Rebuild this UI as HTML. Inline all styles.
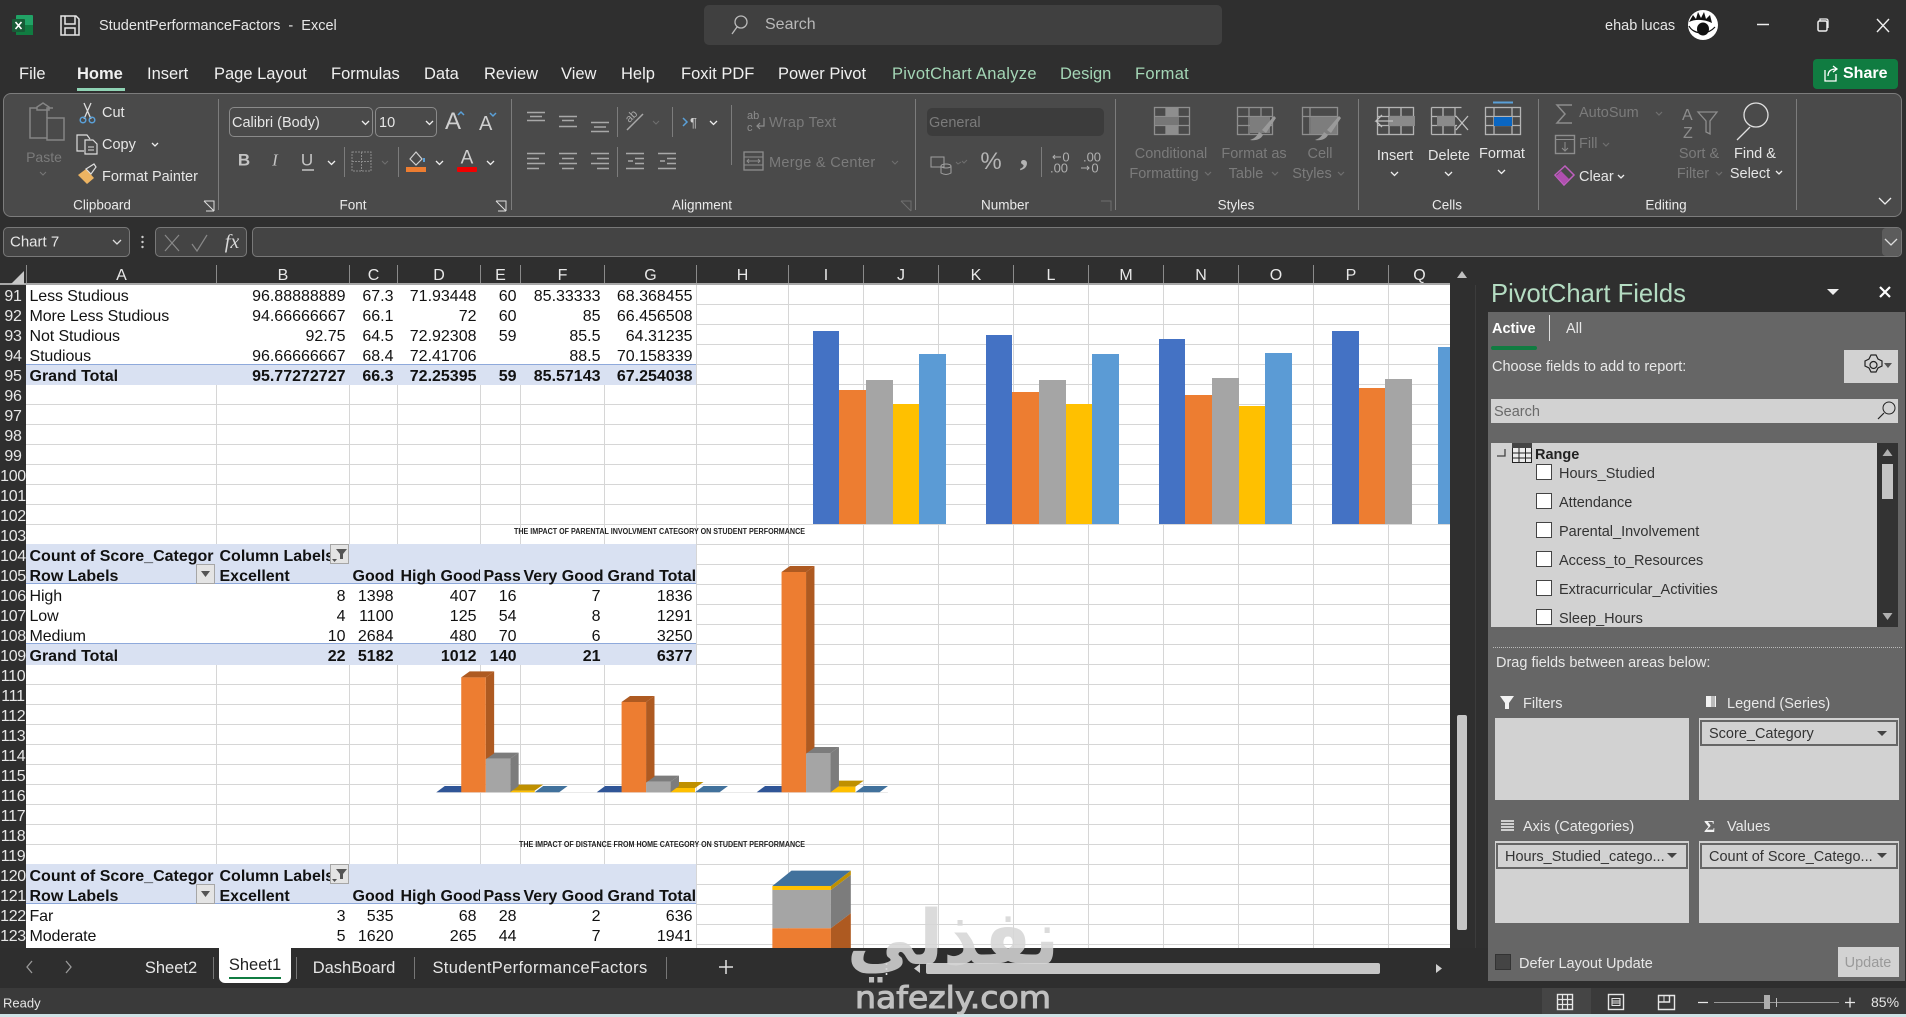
<!DOCTYPE html>
<html><head><meta charset="utf-8"><title>StudentPerformanceFactors - Excel</title>
<style>
*{box-sizing:border-box}
html,body{margin:0;padding:0;width:1906px;height:1017px;overflow:hidden;background:#2f2f2f;font-family:"Liberation Sans",sans-serif;color:#e6e6e6}
.t,.c{position:absolute;white-space:nowrap;font-size:14.5px;line-height:1}
.t{transform:translateY(-50%)}
.c{transform:translate(-50%,-50%)}
.d{color:#7b7b7b}
.tab{font-size:16.5px;top:74px;color:#f0f0f0}
.g{color:#a4d6b6}
.lb{top:205px;font-size:13.5px;color:#eaeaea}
.box{position:absolute}
#sheet{position:absolute;left:0;top:285px;width:1450px;height:663px;background-color:#fff;background-image:repeating-linear-gradient(to bottom,transparent 0,transparent 19px,#d6d6d6 19px,#d6d6d6 20px);overflow:hidden}
#sheet .v{position:absolute;top:0;bottom:0;width:1px;background:#d6d6d6}
.p{position:absolute;left:26px;width:670px;height:20px;background:#fff}
.bl{background:#d9e1f2}
.rows{position:absolute;left:0;top:2px;width:700px;color:#111;font-size:16px;line-height:20px}
.rw{position:relative;height:20px}
.rw span{position:absolute;top:0;height:20px;overflow:hidden;white-space:nowrap;padding:0 3.5px;text-align:right}
.A{left:26px;width:190px;text-align:left!important;letter-spacing:-.1px}
.bd .A{letter-spacing:0}
.B{left:216px;width:133px}.C{left:349px;width:48px}.D{left:397px;width:83px}.E{left:480px;width:40px}.F{left:520px;width:84px}.G{left:604px;width:92px}
.l{text-align:left!important}
.bd span{font-weight:bold}
#colh{position:absolute;left:0;top:265px;width:1450px;height:20px;background:#2f2f2f;border-bottom:2px solid #a8a8a8}
#colh span{position:absolute;top:0;height:18px;font-size:16px;line-height:21px;text-align:center;color:#e8e8e8;border-left:1px solid #8a8a8a}
#rowh{position:absolute;left:0;top:285px;width:26px;height:663px;background:#2f2f2f;overflow:hidden}
#rowh div{height:20px;line-height:24px;font-size:16px;text-align:center;color:#e8e8e8;letter-spacing:-.3px}
.fb{position:absolute;width:19px;height:20px;background:#e4e4e4;border:1px solid #a6a6a6}
#pv{position:absolute;left:1488px;top:312px;width:417px;height:669px;background:#666}
.w{position:absolute;background:#d2d2d2}
.cb{position:absolute;left:1536px;width:16px;height:16px;background:#fff;border:1px solid #444}
.f{color:#333;font-size:14.5px}
.it{position:absolute;background:#d2d2d2;border:2px solid #666;height:26px}
.wh{color:#e8e8e8;font-size:14.5px}
</style></head>
<body>

<!-- tabs / title -->
<span class="t" style="left:99px;top:26px;font-size:14.5px">StudentPerformanceFactors &nbsp;-&nbsp; Excel</span>
<div class="box" style="left:704px;top:5px;width:518px;height:40px;background:#404040;border-radius:5px"></div>
<span class="t" style="left:765px;top:25px;font-size:16px;color:#b8b8b8">Search</span>
<span class="t" style="left:1605px;top:26px;font-size:14.5px">ehab lucas</span>

<span class="t tab" style="left:19px">File</span>
<span class="t tab" style="left:77px;font-weight:bold">Home</span>
<span class="t tab" style="left:147px">Insert</span>
<span class="t tab" style="left:214px">Page Layout</span>
<span class="t tab" style="left:331px">Formulas</span>
<span class="t tab" style="left:424px">Data</span>
<span class="t tab" style="left:484px">Review</span>
<span class="t tab" style="left:561px">View</span>
<span class="t tab" style="left:621px">Help</span>
<span class="t tab" style="left:681px">Foxit PDF</span>
<span class="t tab" style="left:778px">Power Pivot</span>
<span class="t tab g" style="left:892px;letter-spacing:.3px">PivotChart Analyze</span>
<span class="t tab g" style="left:1060px">Design</span>
<span class="t tab g" style="left:1135px;letter-spacing:.3px">Format</span>
<div class="box" style="left:77px;top:88px;width:48px;height:3px;background:#8fd3b4"></div>
<div class="box" style="left:1813px;top:59px;width:85px;height:30px;background:#107c41;border-radius:4px"></div>
<span class="t" style="left:1843px;top:74px;font-size:16px;font-weight:bold;color:#fff">Share</span>

<!-- ribbon -->
<div class="box" style="left:3px;top:93px;width:1899px;height:124px;background:#4a4a4a;border:1px solid #7c7c7c;border-radius:8px"></div>

<span class="c d" style="left:44px;top:157px;font-size:14px">Paste</span>
<span class="t" style="left:102px;top:113px">Cut</span>
<span class="t" style="left:102px;top:145px">Copy</span>
<span class="t" style="left:102px;top:177px">Format Painter</span>
<span class="c lb" style="left:102px">Clipboard</span>

<div class="box" style="left:229px;top:107px;width:144px;height:30px;border:1px solid #8a8a8a;border-radius:5px"></div>
<div class="box" style="left:375px;top:107px;width:62px;height:30px;border:1px solid #8a8a8a;border-radius:5px"></div>
<span class="t" style="left:232px;top:123px">Calibri (Body)</span>
<span class="t" style="left:379px;top:123px">10</span>
<span class="t" style="left:445px;top:122px;font-size:24px;color:#cfcfcf">A</span>
<span class="t" style="left:479px;top:124px;font-size:20px;color:#cfcfcf">A</span>
<span class="c" style="left:244px;top:160px;font-size:17px;font-weight:bold;color:#c4c4c4">B</span>
<span class="c" style="left:275px;top:160px;font-size:17px;font-style:italic;color:#c4c4c4;font-family:'Liberation Serif',serif">I</span>
<span class="c" style="left:307px;top:160px;font-size:17px;color:#c4c4c4">U</span>
<span class="c" style="left:467px;top:158px;font-size:19px;color:#cfcfcf">A</span>
<span class="c lb" style="left:353px">Font</span>

<span class="t d" style="left:769px;top:123px;letter-spacing:.3px">Wrap Text</span>
<span class="t d" style="left:769px;top:163px;letter-spacing:.3px">Merge &amp; Center</span>
<span class="c lb" style="left:702px">Alignment</span>

<div class="box" style="left:927px;top:108px;width:177px;height:28px;background:#3c3c3c;border-radius:5px"></div>
<span class="t d" style="left:929px;top:123px">General</span>
<span class="c" style="left:991px;top:162px;font-size:24px;color:#b4b4b4">%</span>
<span class="c" style="left:1024px;top:155px;font-size:34px;font-weight:bold;color:#b4b4b4;font-family:'Liberation Serif',serif">,</span>
<span class="c" style="left:1066px;top:157px;font-size:13px;color:#b0b0b0">0</span>
<span class="c" style="left:1059px;top:168px;font-size:13px;color:#b0b0b0">.00</span>
<span class="c" style="left:1092px;top:157px;font-size:13px;color:#b0b0b0">.00</span>
<span class="c" style="left:1095px;top:168px;font-size:13px;color:#b0b0b0">0</span>
<span class="c lb" style="left:1005px">Number</span>

<span class="c d" style="left:1171px;top:154px">Conditional</span>
<span class="c d" style="left:1164px;top:174px">Formatting</span>
<span class="c d" style="left:1254px;top:154px">Format as</span>
<span class="c d" style="left:1246px;top:174px">Table</span>
<span class="c d" style="left:1320px;top:154px">Cell</span>
<span class="c d" style="left:1312px;top:174px">Styles</span>
<span class="c lb" style="left:1236px">Styles</span>

<span class="c" style="left:1395px;top:156px">Insert</span>
<span class="c" style="left:1449px;top:156px">Delete</span>
<span class="c" style="left:1502px;top:154px">Format</span>
<span class="c lb" style="left:1447px">Cells</span>

<span class="t d" style="left:1579px;top:113px">AutoSum</span>
<span class="t d" style="left:1579px;top:144px">Fill</span>
<span class="t" style="left:1579px;top:177px">Clear</span>
<span class="c d" style="left:1699px;top:154px">Sort &amp;</span>
<span class="c d" style="left:1693px;top:174px">Filter</span>
<span class="c" style="left:1755px;top:154px">Find &amp;</span>
<span class="c" style="left:1750px;top:174px">Select</span>
<span class="c lb" style="left:1666px">Editing</span>

<!-- formula bar -->
<div class="box" style="left:3px;top:227px;width:127px;height:30px;background:#444;border:1px solid #787878;border-radius:5px"></div>
<span class="t" style="left:10px;top:242px;font-size:15px">Chart 7</span>
<div class="box" style="left:155px;top:227px;width:92px;height:30px;background:#444;border:1px solid #787878;border-radius:5px"></div>
<div class="box" style="left:252px;top:227px;width:1650px;height:30px;background:#444;border:1px solid #787878;border-radius:5px"></div>
<div class="box" style="left:1882px;top:228px;width:19px;height:28px;background:#5c5c5c;border-radius:4px"></div>
<span class="c" style="left:232px;top:242px;font-size:20px;font-style:italic;font-family:'Liberation Serif',serif;color:#d8d8d8">fx</span>

<!-- sheet -->
<div id="sheet">
<i class="v" style="left:216px"></i><i class="v" style="left:349px"></i><i class="v" style="left:397px"></i><i class="v" style="left:480px"></i><i class="v" style="left:520px"></i><i class="v" style="left:604px"></i><i class="v" style="left:696px"></i><i class="v" style="left:788px"></i><i class="v" style="left:863px"></i><i class="v" style="left:938px"></i><i class="v" style="left:1013px"></i><i class="v" style="left:1088px"></i><i class="v" style="left:1163px"></i><i class="v" style="left:1238px"></i><i class="v" style="left:1313px"></i><i class="v" style="left:1388px"></i>
<div class="p" style="top:0;height:80px"></div>
<div class="p bl" style="top:79px;border-top:1.5px solid #8ea9db;height:21px"></div>
<div class="p bl" style="top:259px;height:40px;border-bottom:1.5px solid #8ea9db"></div>
<div class="p" style="top:299px;height:60px"></div>
<div class="p bl" style="top:358px;border-top:1.5px solid #8ea9db;height:22px"></div>
<div class="p bl" style="top:579px;height:40px;border-bottom:1.5px solid #8ea9db"></div>
<div class="p" style="top:619px;height:44px"></div>

<div class="rows">
<div class="rw"><span class="A">Less Studious</span><span class="B">96.88888889</span><span class="C">67.3</span><span class="D">71.93448</span><span class="E">60</span><span class="F">85.33333</span><span class="G">68.368455</span></div>
<div class="rw"><span class="A">More Less Studious</span><span class="B">94.66666667</span><span class="C">66.1</span><span class="D">72</span><span class="E">60</span><span class="F">85</span><span class="G">66.456508</span></div>
<div class="rw"><span class="A">Not Studious</span><span class="B">92.75</span><span class="C">64.5</span><span class="D">72.92308</span><span class="E">59</span><span class="F">85.5</span><span class="G">64.31235</span></div>
<div class="rw"><span class="A">Studious</span><span class="B">96.66666667</span><span class="C">68.4</span><span class="D">72.41706</span><span class="E"></span><span class="F">88.5</span><span class="G">70.158339</span></div>
<div class="rw bd"><span class="A">Grand Total</span><span class="B">95.77272727</span><span class="C">66.3</span><span class="D">72.25395</span><span class="E">59</span><span class="F">85.57143</span><span class="G">67.254038</span></div>
<div class="rw"></div><div class="rw"></div><div class="rw"></div><div class="rw"></div><div class="rw"></div><div class="rw"></div><div class="rw"></div><div class="rw"></div>
<div class="rw bd"><span class="A">Count of Score_Categor</span><span class="B l" style="width:114px">Column Labels</span></div>
<div class="rw bd"><span class="A">Row Labels</span><span class="B l">Excellent</span><span class="C l">Good</span><span class="D l">High Good</span><span class="E l">Pass</span><span class="F l">Very Good</span><span class="G l">Grand Total</span></div>
<div class="rw"><span class="A">High</span><span class="B">8</span><span class="C">1398</span><span class="D">407</span><span class="E">16</span><span class="F">7</span><span class="G">1836</span></div>
<div class="rw"><span class="A">Low</span><span class="B">4</span><span class="C">1100</span><span class="D">125</span><span class="E">54</span><span class="F">8</span><span class="G">1291</span></div>
<div class="rw"><span class="A">Medium</span><span class="B">10</span><span class="C">2684</span><span class="D">480</span><span class="E">70</span><span class="F">6</span><span class="G">3250</span></div>
<div class="rw bd"><span class="A">Grand Total</span><span class="B">22</span><span class="C">5182</span><span class="D">1012</span><span class="E">140</span><span class="F">21</span><span class="G">6377</span></div>
<div class="rw"></div><div class="rw"></div><div class="rw"></div><div class="rw"></div><div class="rw"></div><div class="rw"></div><div class="rw"></div><div class="rw"></div><div class="rw"></div><div class="rw"></div>
<div class="rw bd"><span class="A">Count of Score_Categor</span><span class="B l" style="width:114px">Column Labels</span></div>
<div class="rw bd"><span class="A">Row Labels</span><span class="B l">Excellent</span><span class="C l">Good</span><span class="D l">High Good</span><span class="E l">Pass</span><span class="F l">Very Good</span><span class="G l">Grand Total</span></div>
<div class="rw"><span class="A">Far</span><span class="B">3</span><span class="C">535</span><span class="D">68</span><span class="E">28</span><span class="F">2</span><span class="G">636</span></div>
<div class="rw"><span class="A">Moderate</span><span class="B">5</span><span class="C">1620</span><span class="D">265</span><span class="E">44</span><span class="F">7</span><span class="G">1941</span></div>
</div>
<div class="fb" style="left:330px;top:259px"></div>
<div class="fb" style="left:196px;top:279px"></div>
<div class="fb" style="left:330px;top:579px"></div>
<div class="fb" style="left:196px;top:599px"></div>
</div>

<!-- charts -->
<svg style="position:absolute;left:0;top:0" width="1906" height="1017" viewBox="0 0 1906 1017">
<defs><clipPath id="cl"><rect x="26" y="285" width="1424" height="663"/></clipPath></defs>
<g clip-path="url(#cl)">
<line x1="795" y1="524.5" x2="1450" y2="524.5" stroke="#d9d9d9"/>
<g shape-rendering="crispEdges">
<rect x="813" y="331" width="26" height="193" fill="#4472c4"/><rect x="839" y="390" width="27" height="134" fill="#ed7d31"/><rect x="866" y="380" width="27" height="144" fill="#a5a5a5"/><rect x="893" y="404" width="26" height="120" fill="#ffc000"/><rect x="919" y="354" width="27" height="170" fill="#5b9bd5"/>
<rect x="986" y="335" width="26" height="189" fill="#4472c4"/><rect x="1012" y="392" width="27" height="132" fill="#ed7d31"/><rect x="1039" y="380" width="27" height="144" fill="#a5a5a5"/><rect x="1066" y="404" width="26" height="120" fill="#ffc000"/><rect x="1092" y="354" width="27" height="170" fill="#5b9bd5"/>
<rect x="1159" y="339" width="26" height="185" fill="#4472c4"/><rect x="1185" y="395" width="27" height="129" fill="#ed7d31"/><rect x="1212" y="378" width="27" height="146" fill="#a5a5a5"/><rect x="1239" y="406" width="26" height="118" fill="#ffc000"/><rect x="1265" y="353" width="27" height="171" fill="#5b9bd5"/>
<rect x="1332" y="331" width="27" height="193" fill="#4472c4"/><rect x="1359" y="388" width="26" height="136" fill="#ed7d31"/><rect x="1385" y="379" width="27" height="145" fill="#a5a5a5"/>
<rect x="1438" y="347" width="12" height="177" fill="#5b9bd5"/>
</g>
<text x="514" y="534" font-size="8" font-weight="bold" fill="#222" textLength="291" lengthAdjust="spacingAndGlyphs" font-family="Liberation Sans">THE IMPACT OF PARENTAL INVOLVMENT CATEGORY ON STUDENT PERFORMANCE</text>
<text x="519" y="847" font-size="8" font-weight="bold" fill="#222" textLength="286" lengthAdjust="spacingAndGlyphs" font-family="Liberation Sans">THE IMPACT OF DISTANCE FROM HOME CATEGORY ON STUDENT PERFORMANCE</text>

<g transform="translate(400,550) scale(.3827,.3333)">
 <line x1="95" y1="728" x2="1275" y2="728" stroke="#e4e4e4" stroke-width="2"/>
 <!-- group 1 -->
 <polygon points="95,727 117,708 180,708 160,727" fill="#2f5597"/>
 <polygon points="352,727 374,708 438,708 416,727" fill="#41719c"/>
 <rect x="288" y="722" width="64" height="5" fill="#ffc000"/><polygon points="288,722 310,704 374,704 352,722" fill="#bf9000"/>
 <polygon points="288,626 310,608 310,708 288,727" fill="#7c7c7c"/><rect x="224" y="626" width="64" height="101" fill="#a5a5a5"/><polygon points="224,626 246,608 310,608 288,626" fill="#7c7c7c"/>
 <polygon points="224,382 246,364 246,610 224,628" fill="#ae5a21"/><rect x="160" y="382" width="64" height="345" fill="#ed7d31"/><polygon points="160,382 182,364 246,364 224,382" fill="#ae5a21"/>
 <!-- group 2 -->
 <polygon points="514,727 536,708 599,708 579,727" fill="#2f5597"/>
 <polygon points="771,727 793,708 857,708 835,727" fill="#41719c"/>
 <rect x="707" y="714" width="64" height="13" fill="#ffc000"/><polygon points="707,714 729,696 793,696 771,714" fill="#bf9000"/>
 <polygon points="707,695 729,677 729,708 707,727" fill="#7c7c7c"/><rect x="643" y="695" width="64" height="32" fill="#a5a5a5"/><polygon points="643,695 665,677 729,677 707,695" fill="#7c7c7c"/>
 <polygon points="643,456 665,438 665,680 643,698" fill="#ae5a21"/><rect x="579" y="456" width="64" height="271" fill="#ed7d31"/><polygon points="579,456 601,438 665,438 643,456" fill="#ae5a21"/>
 <!-- group 3 -->
 <polygon points="932,727 954,708 1017,708 997,727" fill="#2f5597"/>
 <polygon points="1190,727 1212,708 1275,708 1253,727" fill="#41719c"/>
 <rect x="1125" y="710" width="65" height="17" fill="#ffc000"/><polygon points="1125,710 1147,692 1212,692 1190,710" fill="#bf9000"/>
 <polygon points="1125,609 1147,591 1147,708 1125,727" fill="#7c7c7c"/><rect x="1061" y="609" width="64" height="118" fill="#a5a5a5"/><polygon points="1061,609 1083,591 1147,591 1125,609" fill="#7c7c7c"/>
 <polygon points="1061,66 1083,48 1083,593 1061,611" fill="#ae5a21"/><rect x="997" y="66" width="64" height="661" fill="#ed7d31"/><polygon points="997,66 1019,48 1083,48 1061,66" fill="#ae5a21"/>
 <!-- stacked -->
 <polygon points="973,1008 1023,962 1178,962 1126,1008" fill="#41719c"/>
 <rect x="973" y="1008" width="153" height="12" fill="#ffc000"/>
 <polygon points="1126,1008 1178,962 1178,975 1126,1020" fill="#bf9000"/>
 <rect x="973" y="1020" width="153" height="115" fill="#a5a5a5"/>
 <polygon points="1126,1020 1178,975 1178,1090 1126,1135" fill="#7c7c7c"/>
 <rect x="973" y="1135" width="153" height="70" fill="#ed7d31"/>
 <polygon points="1126,1135 1178,1090 1178,1205 1126,1205" fill="#ae5a21"/>
</g>
</g>
</svg>

<div id="colh">
<span style="left:26px;width:190px">A</span><span style="left:216px;width:133px">B</span><span style="left:349px;width:48px">C</span><span style="left:397px;width:83px">D</span><span style="left:480px;width:40px">E</span><span style="left:520px;width:84px">F</span><span style="left:604px;width:92px">G</span><span style="left:696px;width:92px">H</span><span style="left:788px;width:75px">I</span><span style="left:863px;width:75px">J</span><span style="left:938px;width:75px">K</span><span style="left:1013px;width:75px">L</span><span style="left:1088px;width:75px">M</span><span style="left:1163px;width:75px">N</span><span style="left:1238px;width:75px">O</span><span style="left:1313px;width:75px">P</span><span style="left:1388px;width:62px">Q</span>
</div>
<div id="rowh">
<div>91</div><div>92</div><div>93</div><div>94</div><div>95</div><div>96</div><div>97</div><div>98</div><div>99</div><div>100</div><div>101</div><div>102</div><div>103</div><div>104</div><div>105</div><div>106</div><div>107</div><div>108</div><div>109</div><div>110</div><div>111</div><div>112</div><div>113</div><div>114</div><div>115</div><div>116</div><div>117</div><div>118</div><div>119</div><div>120</div><div>121</div><div>122</div><div>123</div><div>124</div>
</div>

<!-- vertical scrollbar -->
<div class="box" style="left:1450px;top:265px;width:38px;height:716px;background:#2f2f2f"></div>
<div class="box" style="left:1475px;top:285px;width:1px;height:696px;background:#3c3c3c"></div>
<div class="box" style="left:1457px;top:715px;width:10px;height:215px;background:#c6c6c6;border-radius:2px"></div>

<!-- tab bar + status -->
<div class="box" style="left:0;top:948px;width:1488px;height:40px;background:#2e2e2e"></div>
<div class="box" style="left:0;top:981px;width:1906px;height:7px;background:#2e2e2e"></div>
<div class="box" style="left:0;top:988px;width:1906px;height:26px;background:#3a3a3a"></div>
<div class="box" style="left:0;top:1014px;width:1906px;height:3px;background:#cfe3e6"></div>
<div class="box" style="left:219px;top:948px;width:72px;height:35px;background:#fff;border-radius:0 0 6px 6px"></div>
<div class="box" style="left:229px;top:977px;width:52px;height:2px;background:#107c41"></div>
<span class="c" style="left:171px;top:968px;font-size:16.5px">Sheet2</span>
<span class="c" style="left:255px;top:965px;font-size:16.5px;color:#222">Sheet1</span>
<span class="c" style="left:354px;top:968px;font-size:16.5px">DashBoard</span>
<span class="c" style="left:540px;top:968px;font-size:16.5px;letter-spacing:.35px">StudentPerformanceFactors</span>
<div class="box" style="left:213px;top:957px;width:1px;height:22px;background:#777"></div>
<div class="box" style="left:296px;top:957px;width:1px;height:22px;background:#777"></div>
<div class="box" style="left:414px;top:957px;width:1px;height:22px;background:#777"></div>
<div class="box" style="left:666px;top:957px;width:1px;height:22px;background:#777"></div>
<span class="t" style="left:3px;top:1003px;font-size:13px">Ready</span>
<div class="box" style="left:926px;top:963px;width:454px;height:11px;background:#c6c6c6;border-radius:2px"></div>
<div class="box" style="left:1542px;top:988px;width:49px;height:26px;background:#454545"></div>
<span class="t" style="left:1871px;top:1002px;font-size:14px">85%</span>

<!-- pivot pane -->
<span class="t" style="left:1491px;top:295px;font-size:25.6px;color:#b4dcc2">PivotChart Fields</span>
<div id="pv"></div>
<span class="t" style="left:1492px;top:329px;font-size:14.5px;font-weight:bold;color:#fff">Active</span>
<span class="t wh" style="left:1566px;top:329px">All</span>
<div class="box" style="left:1549px;top:315px;width:1px;height:26px;background:#ddd"></div>
<div class="box" style="left:1491px;top:346px;width:46px;height:4px;background:#107c41;border-radius:2px"></div>
<span class="t wh" style="left:1492px;top:367px">Choose fields to add to report:</span>
<div class="w" style="left:1844px;top:350px;width:54px;height:33px"></div>
<div class="w" style="left:1491px;top:399px;width:407px;height:24px"></div>
<span class="t" style="left:1494px;top:412px;font-size:14.5px;color:#6a6a6a">Search</span>
<div class="w" style="left:1491px;top:443px;width:386px;height:184px"></div>
<div class="box" style="left:1877px;top:443px;width:21px;height:184px;background:#333"></div>
<div class="box" style="left:1882px;top:464px;width:11px;height:35px;background:#c4c4c4"></div>
<span class="t f" style="left:1535px;top:455px;font-weight:bold;color:#222">Range</span>
<div class="cb" style="top:464px"></div><span class="t f" style="left:1559px;top:474px">Hours_Studied</span>
<div class="cb" style="top:493px"></div><span class="t f" style="left:1559px;top:503px">Attendance</span>
<div class="cb" style="top:522px"></div><span class="t f" style="left:1559px;top:532px">Parental_Involvement</span>
<div class="cb" style="top:551px"></div><span class="t f" style="left:1559px;top:561px">Access_to_Resources</span>
<div class="cb" style="top:580px"></div><span class="t f" style="left:1559px;top:590px">Extracurricular_Activities</span>
<div class="cb" style="top:609px"></div><span class="t f" style="left:1559px;top:619px">Sleep_Hours</span>
<div class="box" style="left:1493px;top:647px;width:409px;height:0;border-top:1px dotted #bbb"></div>
<span class="t wh" style="left:1496px;top:663px">Drag fields between areas below:</span>
<span class="t wh" style="left:1523px;top:704px">Filters</span>
<span class="t wh" style="left:1727px;top:704px">Legend (Series)</span>
<span class="t wh" style="left:1523px;top:827px">Axis (Categories)</span>
<span class="t wh" style="left:1727px;top:827px">Values</span>
<div class="w" style="left:1495px;top:718px;width:194px;height:82px"></div>
<div class="w" style="left:1699px;top:718px;width:200px;height:82px"></div>
<div class="w" style="left:1495px;top:841px;width:194px;height:82px"></div>
<div class="w" style="left:1699px;top:841px;width:200px;height:82px"></div>
<div class="it" style="left:1700px;top:720px;width:198px"></div>
<div class="it" style="left:1496px;top:843px;width:192px"></div>
<div class="it" style="left:1700px;top:843px;width:198px"></div>
<span class="t f" style="left:1709px;top:734px">Score_Category</span>
<span class="t f" style="left:1505px;top:857px">Hours_Studied_catego...</span>
<span class="t f" style="left:1709px;top:857px">Count of Score_Catego...</span>
<div class="box" style="left:1495px;top:954px;width:16px;height:16px;background:#444;border:1px solid #333"></div>
<span class="t wh" style="left:1519px;top:964px">Defer Layout Update</span>
<div class="w" style="left:1838px;top:947px;width:61px;height:30px"></div>
<span class="c" style="left:1868px;top:963px;font-size:14.5px;color:#9a9a9a">Update</span>

<!-- icon overlay -->
<svg style="position:absolute;left:0;top:0" width="1906" height="1017" viewBox="0 0 1906 1017" fill="none" stroke-linecap="butt">
<!-- excel logo -->
<rect x="16" y="15" width="17" height="20" rx="1" fill="#21a366"/><rect x="16" y="25" width="17" height="10" fill="#107c41"/><rect x="12" y="19" width="13" height="13" rx="1" fill="#185c37"/>
<path d="M15.5 22l6 7m0-7l-6 7" stroke="#fff" stroke-width="1.6"/>
<!-- save -->
<path d="M61 16h15l3 3v16H61z" stroke="#e6e6e6" stroke-width="1.5"/><path d="M65 16v8h10v-8M65 35v-7h10v7" stroke="#e6e6e6" stroke-width="1.5"/>
<!-- search -->
<circle cx="741" cy="22" r="6" stroke="#bbb" stroke-width="1.3"/><path d="M737 27l-5 7" stroke="#bbb" stroke-width="1.3"/>
<!-- avatar -->
<ellipse cx="1703" cy="25" rx="15" ry="15" fill="#fff"/><path d="M1689 22l4-7 3 4 2-7 3 6 3-6 2 7 4-4 2 8c-8-4-17-4-23-1z" fill="#111"/><ellipse cx="1703" cy="29" rx="6" ry="6.5" fill="#111"/><path d="M1689 26c4 8 18 10 26 1" stroke="#111" stroke-width="1.2"/>
<!-- window -->
<path d="M1757 24.500h12" stroke="#eee" stroke-width="1.500"/><rect x="1818" y="21" width="9" height="10" rx="1.500" stroke="#eee" stroke-width="1.500"/><path d="M1820 21v-2h6q2 0 2 2v7" stroke="#eee" stroke-width="1.300"/>
<path d="M1877 19l12 13m0-13l-12 13" stroke="#eee" stroke-width="1.400"/>
<!-- share icon -->
<path d="M1825 70v11h11v-7M1828 76c0-5 3-7 8-7m-3-3l4 3-4 3" stroke="#fff" stroke-width="1.300"/>
<!-- paste -->
<path d="M37 108h-7v30h17M53 108h-6v10" stroke="#858585" stroke-width="1.500"/><path d="M37 110v-3l6-4 6 4v3z" stroke="#858585" stroke-width="1.500"/><rect x="47" y="118" width="17" height="22" stroke="#858585" stroke-width="1.500"/><path d="M40 172l3 3 3-3" stroke="#777" stroke-width="1"/>
<!-- cut -->
<path d="M84 103l7 16M91 103l-7 16" stroke="#ddd" stroke-width="1.300"/><circle cx="83" cy="120" r="2.800" stroke="#5aa0d8" stroke-width="1.500"/><circle cx="92" cy="120" r="2.800" stroke="#5aa0d8" stroke-width="1.500"/>
<!-- copy -->
<path d="M84 151h-7v-16h10l3 4" stroke="#ddd" stroke-width="1.200"/><path d="M85 140h8l4 4v10H85z" stroke="#ddd" stroke-width="1.200"/><path d="M88 147h6M88 150h6" stroke="#ddd"/>
<path d="M152 143l3 3 3-3" stroke="#eee" stroke-width="1.300"/>
<!-- painter -->
<path d="M78 175l8-6 8 9-7 6z" fill="#edb462"/><path d="M86 169l5 5 5-7-2-3z" stroke="#ddd" stroke-width="1.200"/>
<!-- font combo chevrons -->
<path d="M362 121l3.500 3.500 3.500-3.500M426 121l3.500 3.500 3.500-3.500M328 161l3.500 3.500 3.500-3.500M436 161l3.500 3.500 3.500-3.500M487 161l3.500 3.500 3.500-3.500M710 121l3.500 3.500 3.500-3.500" stroke="#eee" stroke-width="1.300"/>
<path d="M382 161l3 3 3-3M653 121l3 3 3-3M892 161l3 3 3-3M962 161l2 2 3-3" stroke="#6f6f6f" stroke-width="1"/>
<path d="M458 115l3-3 3 3" stroke="#5aa0d8" stroke-width="1.500"/><path d="M490 113l3 3 3-3" stroke="#5aa0d8" stroke-width="1.500"/>
<path d="M302 170h12" stroke="#c4c4c4" stroke-width="1.500"/>
<!-- borders -->
<rect x="352" y="152" width="19" height="19" stroke="#8a8a8a" stroke-dasharray="2 1"/><path d="M361.500 152v19M352 161.500h19" stroke="#8a8a8a" stroke-dasharray="2 1"/>
<!-- fill -->
<path d="M410 159l6-7 6 7-6 6z" stroke="#d0d0d0" stroke-width="1.200"/><path d="M424 158v4" stroke="#5aa0d8" stroke-width="2"/>
<rect x="406" y="167" width="20" height="5" fill="#ed7d31"/><rect x="457" y="167" width="20" height="5" rx="1" fill="#f00000"/>
<!-- separators -->
<g stroke="#7c7c7c"><path d="M218.500 99v111M511.500 99v111M915.500 99v111M1115.500 99v111M1358.500 99v111M1538.500 99v111M1796.500 99v111"/><path d="M344.500 147v30M398.500 147v30"/><path d="M617.500 107v30M672.500 107v30M731.500 105v60M617.500 147v30M1041.500 147v30"/></g>
<!-- launcher -->
<path d="M204 201h10v10M204 201l10 10M206 211h8" stroke="#ddd"/><path d="M496 201h10v10M496 201l10 10M498 211h8" stroke="#ddd"/><path d="M901 201h10v10M901 201l10 10" stroke="#6f6f6f"/><path d="M1101 201h10v10" stroke="#6f6f6f"/>
<!-- alignment lines -->
<g stroke="#a8a8a8" stroke-width="1.500">
<path d="M527 112.500h18M530 116.500h12M527 120.500h18"/><path d="M559 116.500h18M562 120.500h12M559 126.500h18"/><path d="M591 122.500h18M594 127h12M591 131.500h18"/>
<path d="M527 153.500h18M527 158.500h12M527 163.500h18M527 168.500h12"/><path d="M559 153.500h18M562 158.500h12M559 163.500h18M562 168.500h12"/><path d="M591 153.500h18M597 158.500h12M591 163.500h18M597 168.500h12"/>
<path d="M626 153.500h18M635 158.500h9M635 163.500h9M626 168.500h18M628 161h5"/><path d="M658 153.500h18M667 158.500h9M667 163.500h9M658 168.500h18M660 161h5"/>
<path d="M627 130l16-16"/>
</g>
<text x="624" y="122" font-size="11" fill="#a8a8a8" transform="rotate(-45 628 116)">ab</text>
<text x="690" y="127" font-size="13" fill="#cfcfcf" font-family="Liberation Sans">¶</text><path d="M683 118l4 4-4 4" stroke="#5aa0d8" stroke-width="1.500"/>
<!-- wrap -->
<text x="747" y="119" font-size="11" fill="#8d8d8d" font-family="Liberation Sans">ab</text><text x="747" y="131" font-size="11" fill="#8d8d8d" font-family="Liberation Sans">c</text><path d="M764 118v8h-7m3-3l-3 3 3 3" stroke="#8d8d8d" stroke-width="1.200"/>
<rect x="744" y="152" width="19" height="18" stroke="#8d8d8d" stroke-width="1.300"/><path d="M744 157h19M744 165h19M747 161h13M749 159l-2 2 2 2M758 159l2 2-2 2" stroke="#8d8d8d"/>
<!-- number icon -->
<rect x="931" y="157" width="13" height="10" stroke="#a0a0a0"/><ellipse cx="946" cy="166" rx="5" ry="2" stroke="#a0a0a0"/><path d="M941 166v7q5 3 10 0v-7" stroke="#a0a0a0"/>
<path d="M956 162l2 2 3-2" stroke="#6f6f6f"/>
<path d="M1061 157h-8m2-2l-2 2 2 2M1081 168h8m-2-2l2 2-2 2" stroke="#b0b0b0"/>
<!-- CF -->
<g stroke="#8e8e8e" stroke-width="1.300">
<rect x="1154.500" y="107.500" width="35" height="27"/><path d="M1154 116.500h36M1154 125.500h36M1166 107v27M1178 107v27"/>
<rect x="1237.500" y="107.500" width="35" height="27"/><path d="M1237 116.500h36M1237 125.500h36M1249 107v27M1261 107v27"/>
<rect x="1302.500" y="107.500" width="35" height="27"/><path d="M1302 116.500h36M1310 107v27"/>
</g>
<rect x="1166" y="108" width="12" height="8" fill="#8e8e8e"/><rect x="1155" y="117" width="23" height="8" fill="#777"/><rect x="1166" y="126" width="12" height="8" fill="#8e8e8e"/>
<rect x="1250" y="117" width="20" height="16" fill="#7d7d7d"/><rect x="1311" y="117" width="26" height="17" fill="#7d7d7d"/>
<path d="M1250 140c6-2 8-6 9-8l4 3c-2 4-7 6-13 5zM1262 130l12-14 2 2-10 15z" fill="#9a9a9a"/><path d="M1315 140c6-2 8-6 9-8l4 3c-2 4-7 6-13 5zM1327 130l12-14 2 2-10 15z" fill="#9a9a9a"/>
<path d="M1205 172l3 3 3-3M1272 172l3 3 3-3M1338 172l3 3 3-3M1716 172l3 3 3-3M1656 112l3 3 3-3M1603 143l3 3 3-3" stroke="#6f6f6f" stroke-width="1.200"/>
<!-- insert/delete/format -->
<g stroke="#b4b4b4" stroke-width="1.300">
<rect x="1377.500" y="107.500" width="36" height="27"/><path d="M1377 116.500h36M1377 125.500h36M1389 107v27M1401 107v27"/>
<path d="M1431.500 107.500h30M1431.500 134.500h30M1431.500 107.500v27M1431 116.500h26M1431 125.500h26M1443 107v27M1455 107v9M1455 125v9"/>
<rect x="1485.500" y="107.500" width="35" height="27"/><path d="M1485 116.500h36M1485 125.500h36M1494 107v27M1512 107v27"/>
</g>
<rect x="1389" y="116" width="26" height="10" fill="#8a8a8a"/><path d="M1393 121h-17l6-6m-6 6l6 6" stroke="#c0c0c0" stroke-width="1.300"/>
<rect x="1437" y="116" width="18" height="10" fill="#8a8a8a"/><path d="M1456 116l12 14m0-14l-12 14" stroke="#c0c0c0" stroke-width="1.300"/>
<rect x="1494" y="117" width="18" height="9" fill="#0a66c2"/><path d="M1493 102.500h20" stroke="#5aa0d8" stroke-width="2"/>
<path d="M1391 172l3.500 3.500 3.500-3.500M1445 172l3.500 3.500 3.500-3.500M1498 170l3.500 3.500 3.500-3.500M1776 171l3 3 3-3M1618 175l3 3 3-3" stroke="#eee" stroke-width="1.300"/>
<!-- editing -->
<g transform="translate(3,0)">
<path d="M1569 105h-15l8 9-8 9h15" stroke="#8d8d8d" stroke-width="1.500"/>
<rect x="1552.500" y="135.500" width="19" height="18" stroke="#8d8d8d" stroke-width="1.400"/><path d="M1552 139.500h19M1562 142v9m-3-3l3 3 3-3" stroke="#8d8d8d"/>
<path d="M1552 175l10-9 9 9-10 10z" stroke="#c05fc0" stroke-width="1.500"/><path d="M1553 176l5-5 8 8-5 5z" fill="#b04fb0"/>
</g>
<g transform="translate(5,0)">
<text x="1677" y="120" font-size="16" fill="#8d8d8d" font-family="Liberation Sans">A</text><text x="1678" y="138" font-size="16" fill="#8d8d8d" font-family="Liberation Sans">Z</text>
<path d="M1693 112h19l-7 9v13l-4-2v-11z" stroke="#8d8d8d" stroke-width="1.300"/>
<circle cx="1751" cy="115" r="12" stroke="#e0e0e0" stroke-width="1.300"/><path d="M1745 127l-13 13" stroke="#e0e0e0" stroke-width="1.300"/>
</g>
<path d="M1879 198l6 6 6-6" stroke="#eee" stroke-width="1.300"/>
<!-- formula bar -->
<path d="M113 240l4 4 4-4M1885 239l6 6 6-6" stroke="#ddd" stroke-width="1.300"/>
<circle cx="142.500" cy="237" r="1.200" fill="#ccc"/><circle cx="142.500" cy="242" r="1.200" fill="#ccc"/><circle cx="142.500" cy="247" r="1.200" fill="#ccc"/>
<path d="M165 235l14 16m0-16l-14 16" stroke="#888" stroke-width="1.200"/><path d="M192 244l5 7 10-16" stroke="#888" stroke-width="1.200"/>
<!-- sheet corner -->
<path d="M24 271v13H11z" fill="#c8c8c8"/>
<path d="M1462 271l5 7h-10z" fill="#c0c0c0"/>
<!-- filter btns -->
<g fill="#555"><path d="M201 571h9l-4.500 6z"/><path d="M201 891h9l-4.500 6z"/><path d="M336 549h11l-4 5v5h-3v-5z"/><path d="M336 869h11l-4 5v5h-3v-5z"/><path d="M332 559h5l-2.500 3z"/><path d="M332 879h5l-2.500 3z"/></g>
<!-- tab nav -->
<path d="M32 961l-5 6 5 6M66 961l5 6-5 6" stroke="#9a9a9a" stroke-width="1.300"/>
<path d="M726 960v14M719 967h14" stroke="#e0e0e0" stroke-width="1.500"/>
<path d="M920 964l-6 4.500 6 4.500zM1436 964l6 4.500-6 4.500z" fill="#cfcfcf"/>
<circle cx="886.500" cy="964" r="1" fill="#eee"/><circle cx="886.500" cy="969" r="1" fill="#eee"/><circle cx="886.500" cy="974" r="1" fill="#eee"/>
<!-- pivot pane -->
<path d="M1827 289h12l-6 6z" fill="#eee"/><path d="M1880 287l10 10m0-10l-10 10" stroke="#fff" stroke-width="2.200"/>
<path d="M1865 361l4-2 2-4h5l2 4 4 2v5l-4 2-2 4h-5l-2-4-4-2z" stroke="#222" stroke-width="1.200"/><circle cx="1873.500" cy="365" r="3.500" stroke="#222" stroke-width="1.200"/><path d="M1884 363h8l-4 5z" fill="#555"/>
<circle cx="1889" cy="408" r="6" stroke="#222" stroke-width="1"/><path d="M1884 413l-6 6" stroke="#222" stroke-width="1.200"/>
<path d="M1505 449v7h-8" stroke="#444" stroke-width="1.300"/>
<rect x="1512.500" y="443.500" width="19" height="19" stroke="#222" fill="#ececec"/><rect x="1512" y="443" width="20" height="5" fill="#444"/><path d="M1512 453h20M1512 458h20M1519 448v15M1525.500 448v15" stroke="#222"/>
<path d="M1887.500 449l5 7h-10zM1887.500 620l-5-7h10z" fill="#b0b0b0"/>
<path d="M1500 696h14l-5 7v6h-4v-6z" fill="#f2f2f2"/>
<path d="M1706 696h10v11h-10z" fill="#f2f2f2"/><path d="M1712 696v11M1714 696v11" stroke="#666" stroke-width=".8"/>
<path d="M1501 821h13M1501 824h13M1501 827h13M1501 830h13" stroke="#f2f2f2" stroke-width="1.600"/>
<text x="1704" y="832" font-size="17" font-weight="bold" fill="#f2f2f2" font-family="Liberation Serif">Σ</text>
<path d="M1877 731h10l-5 5zM1667 853h10l-5 5zM1877 853h10l-5 5z" fill="#444"/>
<!-- status icons -->
<rect x="1557.500" y="994.500" width="15" height="15" stroke="#e6e6e6" stroke-width="1.400"/><path d="M1557 999.500h16M1557 1004.500h16M1562.500 994v16M1567.500 994v16" stroke="#e6e6e6" stroke-width="1.200"/>
<rect x="1608.500" y="994.500" width="15" height="15" stroke="#e6e6e6" stroke-width="1.400"/><path d="M1612 998.500h8v7h-8zM1612 1001h8M1612 1003h8" stroke="#e6e6e6"/>
<path d="M1658.500 995.500h16v14h-16zM1658.500 1002h11v-6.500" stroke="#e6e6e6" stroke-width="1.400"/><path d="M1664 995v7" stroke="#e6e6e6"/>
<path d="M1698 1002.500h10M1845 1002.500h10M1850 997.500v10" stroke="#e6e6e6" stroke-width="1.300"/>
<path d="M1714 1002.500h125" stroke="#999"/><path d="M1776.500 998v9" stroke="#bbb"/><rect x="1764" y="995" width="6" height="14" fill="#adadad"/>
</svg>

<!-- watermark -->
<svg style="position:absolute;left:0;top:0;opacity:.86" width="1906" height="1017" viewBox="0 0 1906 1017">
<text x="953" y="964" text-anchor="middle" font-size="76" font-weight="bold" fill="#d6d6d6" font-family="DejaVu Sans,sans-serif" textLength="212" lengthAdjust="spacingAndGlyphs">نفذلي</text>
<text x="855" y="1008" font-size="30" fill="#d6d6d6" stroke="#d6d6d6" stroke-width="1" font-family="DejaVu Sans,sans-serif" textLength="196" lengthAdjust="spacingAndGlyphs">nafezly.com</text>
</svg>
</body></html>
